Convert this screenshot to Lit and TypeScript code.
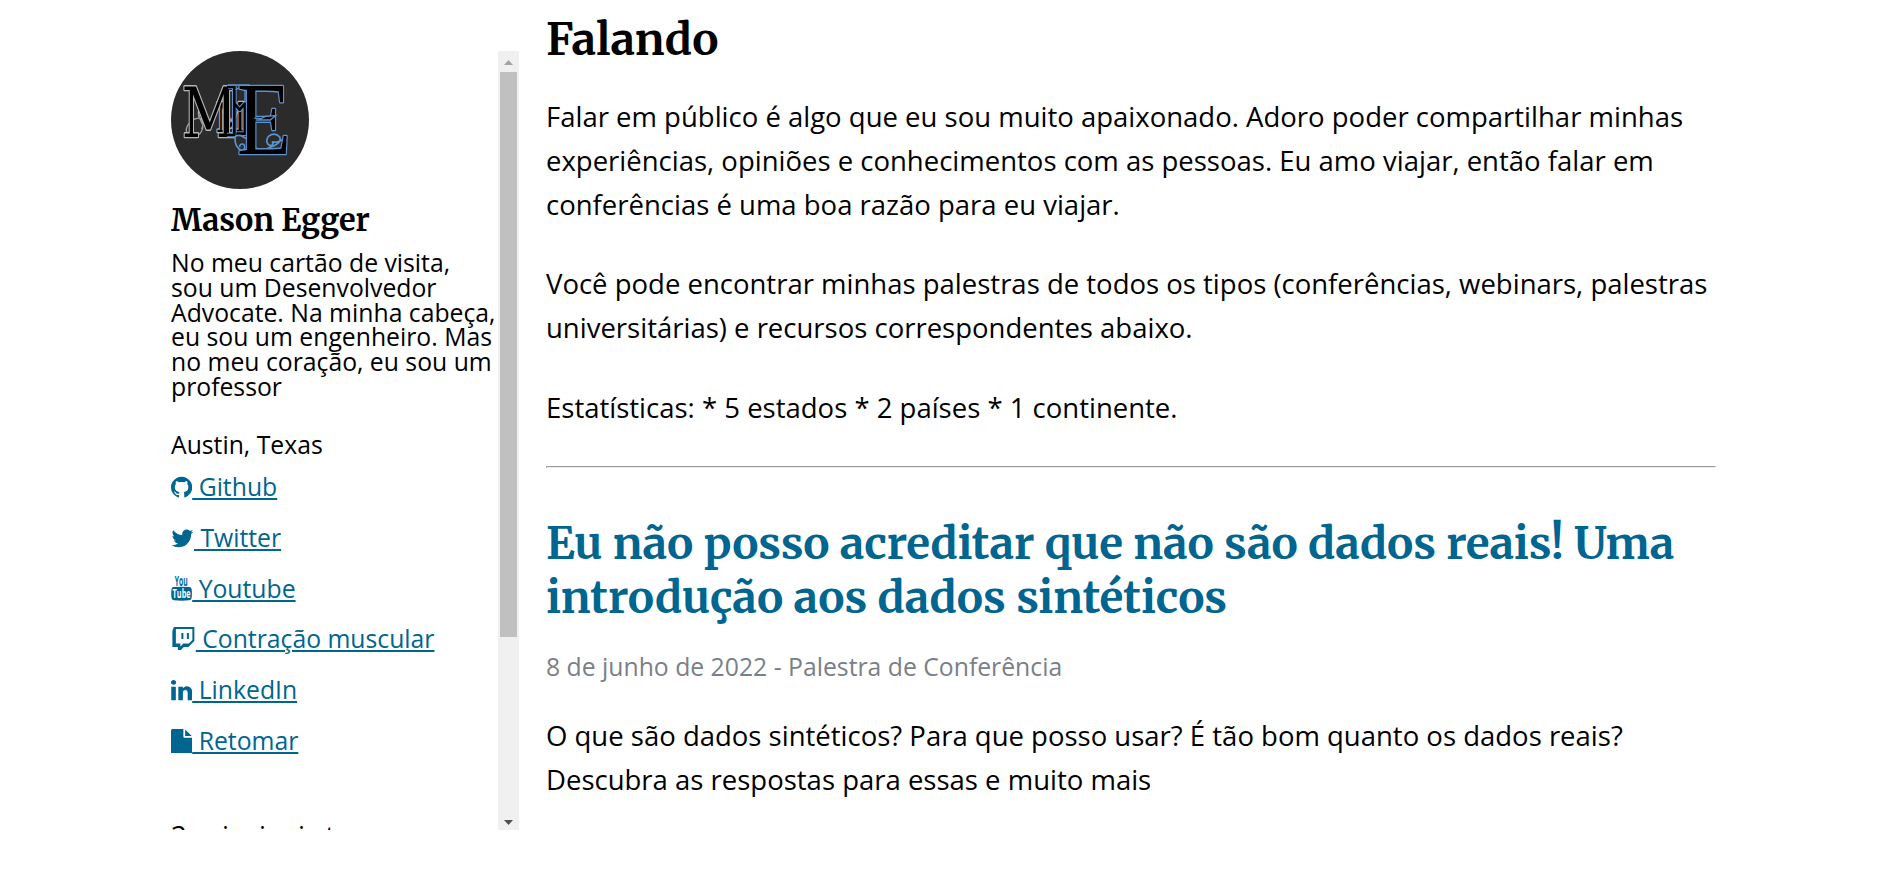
import { LitElement, html, svg, css, nothing } from "lit";
import { customElement } from "lit/decorators.js";

interface Icon { viewBox: string; width: number; body: unknown }

// Icon boxes use 1792 units per em, with the baseline at 1536.
const icons: Record<string, Icon> = {
  github: { viewBox: "128 0 1536 1792", width: 1536, body: svg`<path d="M896 128q209 0 385.5 103t279.5 279.5 103 385.5q0 251-146.5 451.5t-378.5 277.5q-27 5-40-7t-13-30q0-3 .5-76.5t.5-134.5q0-97-52-142 57-6 102.5-18t94-39 81-66.5 53-105 20.5-150.5q0-119-79-206 37-91-8-204-28-9-81 11t-92 44l-38 24q-93-26-192-26t-192 26q-16-11-42.5-27t-83.5-38.5-85-13.5q-45 113-8 204-79 87-79 206 0 85 20.5 150t52.5 105 80.5 67 94 39 102.5 18q-39 36-49 103-21 10-45 15t-57 5-65.5-21.5-55.5-62.5q-19-32-48.5-52t-49.5-24l-20-3q-21 0-29 4.5t-5 11.5 9 14 13 12l7 5q22 10 43.5 38t31.5 51l10 23q13 38 44 61.5t67 30 69.5 7 55.5-3.5l23-4q0 38 .5 88.5t.5 54.5q0 18-13 30t-40 7q-232-77-378.5-277.5t-146.5-451.5q0-209 103-385.5t279.5-279.5 385.5-103z"/>` },
  twitter: { viewBox: "64 0 1664 1792", width: 1664, body: svg`<path d="M1684 408q-67 98-162 167 1 14 1 42 0 130-38 259.5t-115.5 248.5-184.5 210.5-258 146-323 54.5q-271 0-496-145 35 4 78 4 225 0 401-138-105-2-188-64.5t-114-159.5q33 5 61 5 43 0 85-11-112-23-185.5-111.5t-73.5-205.5v-4q68 38 146 41-66-44-105-115t-39-154q0-88 44-163 121 149 294.5 238.5t371.5 99.5q-8-38-8-74 0-134 94.5-228.5t228.5-94.5q140 0 236 102 109-21 205-78-37 115-142 178 93-10 186-50z"/>` },
  youtube: { viewBox: "128 0 1536 1792", width: 1536, body: svg`
    <text class="tube" x="400" y="690" font-size="960" textLength="930" lengthAdjust="spacingAndGlyphs">You</text>
    <path d="M330 800Q890 760 1460 800 1600 810 1625 960 1660 1260 1625 1570 1600 1730 1460 1755 890 1820 330 1755 190 1730 165 1570 130 1260 165 960 190 810 330 800z"/>
    <text class="tube light" x="240" y="1600" font-size="900" textLength="1310" lengthAdjust="spacingAndGlyphs">Tube</text>` },
  twitch: { viewBox: "0 0 1792 1792", width: 1792, body: svg`<path d="M896 434v434h-145v-434h145zm398 0v434h-145v-434h145zm0 760l253-254v-795h-1194v1049h326v217l217-217h398zm398-1194v1013l-434 434h-326l-217 217h-217v-217h-398v-1158l109-289h1483z"/>` },
  linkedin: { viewBox: "128 0 1536 1792", width: 1536, body: svg`<path d="M477 625v991h-330v-991h330zm21-306q1 73-50.5 122t-135.5 49h-2q-82 0-132-49t-50-122q0-74 51.5-122.5t134.5-48.5 133 48.5 51 122.5zm1166 729v568h-329v-530q0-105-40.5-164.5t-126.5-59.5q-63 0-105.5 34.5t-63.5 85.5q-11 30-11 81v553h-329q2-399 2-647t-1-296l-1-48h329v144h-2q20-32 41-56t56.5-52 87-43.5 114.5-15.5q171 0 275 113.5t104 332.5z"/>` },
  file: { viewBox: "128 0 1536 1792", width: 1536, body: svg`<path d="M1152 512v-472q22 14 36 28l408 408q14 14 28 36h-472zm-128 32q0 40 28 68t68 28h544v1056q0 40-28 68t-68 28h-1344q-40 0-68-28t-28-68v-1600q0-40 28-68t68-28h800v544z"/>` },
};

const links = [
  { icon: "github", label: "Github" },
  { icon: "twitter", label: "Twitter" },
  { icon: "youtube", label: "Youtube" },
  { icon: "twitch", label: "Contração muscular" },
  { icon: "linkedin", label: "LinkedIn" },
  { icon: "file", label: "Retomar" },
];

const bio = [
  "No meu cartão de visita,",
  "sou um Desenvolvedor",
  "Advocate. Na minha cabeça,",
  "eu sou um engenheiro. Mas",
  "no meu coração, eu sou um",
  "professor",
];

const lines = (rows: string[]) => rows.map((r, i) => html`${i ? html`<br>` : nothing}${r}`);

@customElement("side-bar")
class SideBar extends LitElement {
  static styles = css`
    :host { display: flex; width: 348px; height: 779px; overflow: hidden; color: #000; font: 24.75px/24.75px "Open Sans", sans-serif; }
    .content { flex: 1; min-width: 0; overflow: hidden; white-space: nowrap; }
    .avatar { display: block; width: 138px; height: 138px; }
    .avatar text { font-family: "Liberation Serif", serif; font-weight: 400; fill: #000; paint-order: stroke; stroke-linejoin: round; }
    .avatar .slab { font-family: "DejaVu Serif", serif; }
    .name { margin: 12.5px 0 0; font: 700 30.6px/37px Merriweather, "Noto Serif", "DejaVu Serif", serif; }
    .bio { margin: 12.7px 0 0; }
    .place { margin: 33px 0 0; }
    .links { list-style: none; margin: 4.7px 0 0; padding: 0; }
    .links li { height: 50.75px; line-height: 50.75px; }
    a { color: #00658f; text-decoration: underline; }
    a svg { height: 24.75px; vertical-align: -3.54px; fill: currentColor; }
    .tube { font-family: "Open Sans", sans-serif; font-weight: 700; }
    .light { fill: #fff; }
    .top { margin: 47px 0 0; font-size: 27.5px; line-height: 44px; }
    .bar { display: flex; flex-direction: column; align-items: center; width: 21px; background: #f0f0f0; }
    .bar svg { display: block; width: 21px; height: 21px; }
    .thumb { width: 17px; height: 565px; background: #c0c0c0; }
    .rest { flex: 1; }
  `;
  render() {
    return html`
      <div class="content">
        <svg class="avatar" viewBox="0 0 414 414">
          <circle cx="207" cy="207" r="207" fill="#2b2b2b"/>
          <path d="M76 132C100 142 82 168 82 188S104 216 92 240 58 252 48 246C40 230 58 206 78 202S100 214 92 234M84 198C98 182 96 166 84 158" fill="none" stroke="#a0a0a0" stroke-width="4"/>
          <g stroke-width="8" stroke="#b5b5b5">
            <text class="slab" x="134" y="243" font-size="122" textLength="90" lengthAdjust="spacingAndGlyphs">M</text>
            <text class="slab" x="32" y="257" font-size="210" textLength="166" lengthAdjust="spacingAndGlyphs">M</text>
          </g>
          <g fill="none" stroke-linejoin="round">
            <path d="M172 108H190V252H168M196 248H222V158L206 176 190 158" stroke="#5b93cf" stroke-width="14"/>
            <path d="M168 108H190V252H168M196 248H222V158L206 176 190 158" stroke="#000" stroke-width="8"/>
            <path d="M170 102H236M194 116Q212 104 222 120V150" stroke="#5b93cf" stroke-width="4"/>
            <path d="M190 262Q192 250 210 254 236 264 246 288 272 302 300 288 334 276 326 258 312 242 292 256 280 276 298 284 308 284 306 270M348 256Q326 276 302 274" stroke="#5b93cf" stroke-width="5"/>
            <path d="M192 258Q190 290 214 300 226 292 218 280 206 276 206 288" stroke="#5b93cf" stroke-width="5"/>
          </g>
          <text x="198" y="309" font-size="314" textLength="162" lengthAdjust="spacingAndGlyphs" stroke="#5b93cf" stroke-width="8">E</text>
          <path d="M250 201L270 203 284 196 314 194 298 207H254" fill="#000" stroke="#5b93cf" stroke-width="4"/>
        </svg>
        <h3 class="name">Mason Egger</h3>
        <p class="bio">${lines(bio)}</p>
        <p class="place">Austin, Texas</p>
        <ul class="links">
          ${links.map(({ icon, label }) => {
            const i = icons[icon];
            return html`<li><a><svg viewBox=${i.viewBox} width=${(i.width / 1792) * 24.75}>${i.body}</svg>${" " + label}</a></li>`;
          })}
        </ul>
        <p class="top">3 principais tags</p>
      </div>
      <div class="bar">
        <svg viewBox="0 0 21 21"><path d="M6 14L10.5 9 15 14z" fill="#a3a3a3"/></svg>
        <div class="thumb"></div>
        <div class="rest"></div>
        <svg viewBox="0 0 21 21"><path d="M6 11H15L10.5 16z" fill="#505050"/></svg>
      </div>`;
  }
}

@customElement("app-root")
class AppRoot extends LitElement {
  static styles = css`
    :host { display: flex; align-items: flex-start; box-sizing: border-box; height: 884px; overflow: hidden; padding-left: 171px; background: #fff; color: #000; font: 27.5px/44px "Open Sans", sans-serif; }
    side-bar { margin-top: 51px; flex: none; }
    main { width: 1170px; margin-left: 27px; padding-top: 13px; white-space: nowrap; }
    h1, h2 { margin: 0; font: 700 44px/54px Merriweather, "Noto Serif", "DejaVu Serif", serif; }
    h1 { margin-bottom: 28.3px; }
    p { margin: 0 0 36px; }
    .intro { margin-bottom: 35px; }
    hr { margin: 0 0 49px; }
    h2 { color: #00658f; letter-spacing: -0.02px; }
    .tight { letter-spacing: -0.1px; }
    .date { margin: 21.3px 0 27.3px; color: #7a7f87; font-size: 24.75px; line-height: 40px; }
  `;
  render() {
    return html`
      <side-bar></side-bar>
      <main>
        <h1>Falando</h1>
        <p class="intro">${lines(["Falar em público é algo que eu sou muito apaixonado. Adoro poder compartilhar minhas", "experiências, opiniões e conhecimentos com as pessoas. Eu amo viajar, então falar em", "conferências é uma boa razão para eu viajar."])}</p>
        <p>${lines(["Você pode encontrar minhas palestras de todos os tipos (conferências, webinars, palestras", "universitárias) e recursos correspondentes abaixo."])}</p>
        <p>Estatísticas: * 5 estados * 2 países * 1 continente.</p>
        <hr>
        <h2><span class="tight">Eu não posso acreditar que não são dados reais! Uma</span><br>introdução aos dados sintéticos</h2>
        <div class="date">8 de junho de 2022 - Palestra de Conferência</div>
        <p>${lines(["O que são dados sintéticos? Para que posso usar? É tão bom quanto os dados reais?", "Descubra as respostas para essas e muito mais"])}</p>
      </main>`;
  }
}
